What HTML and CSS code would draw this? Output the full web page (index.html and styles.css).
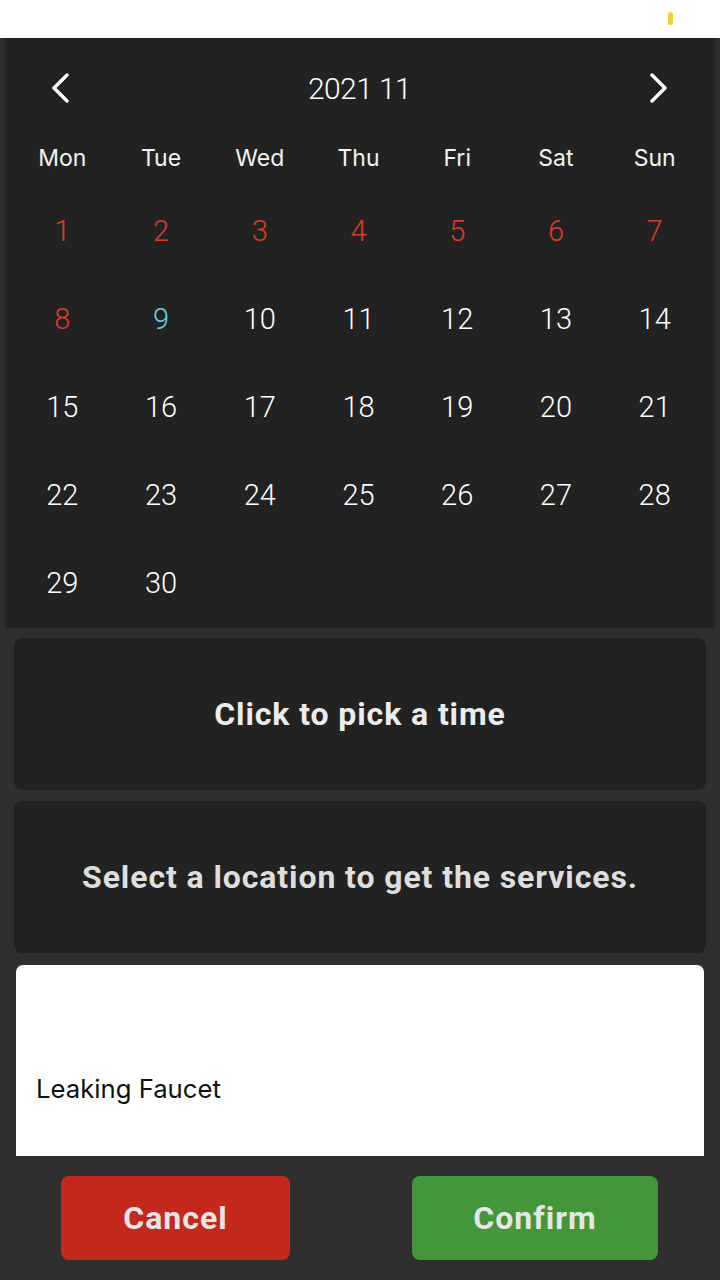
FILE: index.html
```html
<!DOCTYPE html>
<html lang="en">
<head>
<meta charset="utf-8">
<title>Booking</title>
<link rel="stylesheet" href="styles.css">
</head>
<body>
<div class="statusbar"><span class="pill"></span></div>
<section class="calendar">
  <div class="cal-head">
    <svg class="chev" width="20" height="30" viewBox="0 0 20 30"><polyline points="16,2 3,15 16,28" fill="none" stroke="#fff" stroke-width="3.4" stroke-linecap="round" stroke-linejoin="round"/></svg>
    <div class="cal-title">2021 11</div>
    <svg class="chev" width="20" height="30" viewBox="0 0 20 30"><polyline points="4,2 17,15 4,28" fill="none" stroke="#fff" stroke-width="3.4" stroke-linecap="round" stroke-linejoin="round"/></svg>
  </div>
  <div class="dow">
    <span>Mon</span><span>Tue</span><span>Wed</span><span>Thu</span><span>Fri</span><span>Sat</span><span>Sun</span>
  </div>
  <div class="days">
    <span class="red">1</span><span class="red">2</span><span class="red">3</span><span class="red">4</span><span class="red">5</span><span class="red">6</span><span class="red">7</span>
    <span class="red">8</span><span class="today">9</span><span>10</span><span>11</span><span>12</span><span>13</span><span>14</span>
    <span>15</span><span>16</span><span>17</span><span>18</span><span>19</span><span>20</span><span>21</span>
    <span>22</span><span>23</span><span>24</span><span>25</span><span>26</span><span>27</span><span>28</span>
    <span>29</span><span>30</span>
  </div>
</section>
<div class="card">Click to pick a time</div>
<div class="card card-loc">Select a location to get the services.</div>
<div class="service-box"><div class="service">Leaking Faucet</div></div>
<div class="actions">
  <button class="btn btn-cancel">Cancel</button>
  <button class="btn btn-confirm">Confirm</button>
</div>
</body>
</html>
```
FILE: styles.css
```css
* { box-sizing: border-box; }
html, body { margin: 0; padding: 0; }
body {
  width: 720px;
  height: 1280px;
  background: #2f2f2f;
  font-family: "Inter", "Roboto", sans-serif;
  overflow: hidden;
}
.statusbar {
  height: 38px;
  background: #fff;
  display: flex;
  justify-content: flex-end;
  padding: 12px 47px 0 0;
}
.pill {
  width: 5px;
  height: 13px;
  border-radius: 3px;
  background: #f2cf3a;
}
.calendar {
  margin: 0 5px;
  height: 590px;
  background: #222;
  padding: 0 11px 0 8px;
  color: #fff;
}
.cal-head {
  height: 100px;
  display: flex;
  align-items: center;
  justify-content: space-between;
  padding: 0 36px 0 38px;
}
.chev { display: block; }
.cal-title {
  font-family: "Roboto", sans-serif;
  font-weight: 300;
  font-size: 30px;
  letter-spacing: -0.6px;
}
.dow {
  display: grid;
  grid-template-columns: repeat(7, 1fr);
  height: 40px;
  align-items: center;
  text-align: center;
  font-family: "Inter", sans-serif;
  font-size: 23px;
  font-weight: 400;
  color: #f2f2f2;
}
.days {
  margin-top: 9px;
  display: grid;
  grid-template-columns: repeat(7, 1fr);
  grid-auto-rows: 88px;
  align-items: center;
  text-align: center;
  font-family: "Roboto", sans-serif;
  font-weight: 300;
  font-size: 29px;
  color: #fff;
}
.days .red { color: #e0392b; }
.days .today { color: #5fd3e4; }
.card {
  margin: 10px 14px 0 14px;
  height: 152px;
  background: #222;
  border-radius: 8px;
  display: flex;
  align-items: center;
  justify-content: center;
  font-family: "Roboto", sans-serif;
  font-weight: 700;
  font-size: 32px;
  letter-spacing: 0.9px;
  color: #ececec;
}
.card-loc {
  margin-top: 11px;
  color: #dedede;
}
.service-box {
  margin: 12px 16px 0 16px;
  height: 191px;
  background: #fff;
  border-radius: 7px 7px 0 0;
  padding: 108px 0 0 20px;
}
.service {
  font-family: "Inter", sans-serif;
  font-size: 25.7px;
  color: #111;
}
.actions {
  display: flex;
  padding: 20px 0 0 61px;
  gap: 122px;
}
.btn {
  height: 84px;
  border: none;
  border-radius: 8px;
  font-family: "Roboto", sans-serif;
  font-weight: 700;
  font-size: 32px;
  letter-spacing: 1px;
  color: #e6e6e6;
}
.btn-cancel { width: 229px; background: #c4291e; }
.btn-confirm { width: 246px; background: #43963a; }
```
